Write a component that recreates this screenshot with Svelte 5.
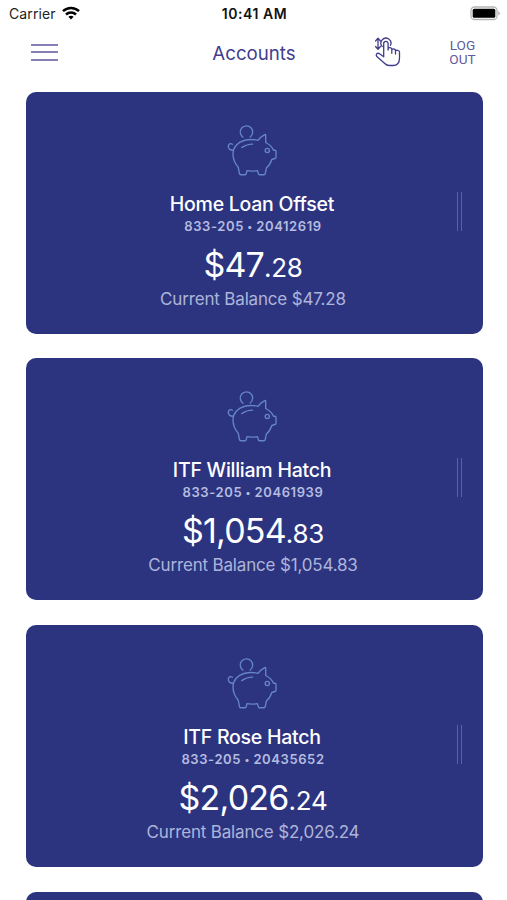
<script lang="ts">
	type Account = {
		name: string;
		bsb: string;
		number: string;
		dollars: string;
		cents: string;
	};

	const accounts: Account[] = [
		{ name: 'Home Loan Offset', bsb: '833-205', number: '20412619', dollars: '$47', cents: '.28' },
		{ name: 'ITF William Hatch', bsb: '833-205', number: '20461939', dollars: '$1,054', cents: '.83' },
		{ name: 'ITF Rose Hatch', bsb: '833-205', number: '20435652', dollars: '$2,026', cents: '.24' },
	];
</script>

<div class="screen">
	<div class="status">
		<div class="carrier">
			<span>Carrier</span>
			<svg width="18" height="14" viewBox="0 0 18 14" fill="none" stroke="#000" stroke-width="2.5">
				<path d="M1 5.2C5.5.9 12.5.9 17 5.2" />
				<path d="M4 8.5c2.8-2.600 7.200-2.600 10 0" />
				<path d="M6.400 10.700c1.500-1.300 3.700-1.300 5.200 0L9 13.500z" fill="#000" stroke="none" />
			</svg>
		</div>
		<div class="time">10:41 AM</div>
		<svg class="battery" width="30" height="15" viewBox="0 0 30 15">
			<rect x="1" y="1" width="26" height="12.5" rx="3.5" fill="#fff" stroke="#b5b5b5" stroke-width="1.3" />
			<rect x="2.700" y="2.700" width="22.600" height="9.100" rx="1.500" fill="#000" />
			<path d="M28.300 5v4.500q3-2.200 0-4.500" fill="#aaa" />
		</svg>
	</div>

	<header>
		<button type="button" class="menu" aria-label="Menu"><i></i><i></i><i></i></button>
		<h1>Accounts</h1>
		<button type="button" class="gesture" aria-label="Quick actions">
			<svg width="28" height="32" viewBox="0 0 28 32" fill="none" stroke="#3f3d8c" stroke-width="1.3" stroke-linecap="round" stroke-linejoin="round">
				<path d="M4 2.500v10.500M1.600 5 4 2.200 6.400 5M1.600 10.500 4 13.300l2.400-2.800" />
				<path d="M8.200 10.500a5 5 0 1 1 8.300-1.200" />
				<path d="M9.700 19V7.600a2.200 2.200 0 0 1 4.400 0V14v-1.300c0-1.500 3.700-1.300 3.700.6V15v-1c0-1.600 3.700-1.300 3.700.6V16v-.8c0-1.400 4-1.300 4 .8v6c0 4.600-2.500 7.500-6.500 7.500h-3.500c-2.300 0-3.700-.8-5-2.300L2.800 20.500c-1.600-2.200.6-4.200 2.800-2.700l4.100 3V18M17.800 15v2.300M21.500 16v2" />
			</svg>
		</button>
		<button type="button" class="logout">LOG<br />OUT</button>
	</header>

	<main>
		{#each accounts as account}
			<section class="card">
				<svg class="pig" width="52" height="54" viewBox="12 8 52 54" fill="none" stroke="#6584cb" stroke-width="1.350" stroke-linecap="round" stroke-linejoin="round">
					<path d="M28 21.200a6.200 6.200 0 1 1 7.200-.2" />
					<path d="M43 24.300c-4-1-9.500-1-14 .2-6 1.700-11 6.500-11 13.500 0 6 2 9.500 5.200 13.200l1.300 6.500q.2 1 1.200 1H30q1 0 1.200-1l.8-3q5 .7 10.500 0l.8 3q.2 1 1.200 1H49q1 0 1.200-1l1.300-6c2.700-2 4.300-5 5.300-8.200l3.200-1q1-.3 1-1.300v-6q0-1-1-1h-1.500c-1.500-3.500-4.500-6-7.800-7.700v-7.200q0-1.200-1-.6c-2.600 1.500-5 3.200-6.700 5.600z" />
					<path d="M26.800 31.600c3.200-2.300 6.700-3.500 10.900-3.500" />
					<circle cx="52.300" cy="34.500" r="2.100" />
					<path d="M18.300 34.200c-3.300 0-5-2-5-4s2.200-3.500 4-2" />
				</svg>
				<h2>{account.name}</h2>
				<p class="number">{account.bsb} <b>•</b> {account.number}</p>
				<p class="amount">{account.dollars}<small>{account.cents}</small></p>
				<p class="balance">Current Balance {account.dollars}{account.cents}</p>
				<span class="handle"></span>
			</section>
		{/each}
		<section class="card"></section>
	</main>
</div>

<style>
	:global(body) {
		background: #fff;
		overflow: hidden;
	}
	.screen {
		width: 507px;
		height: 900px;
		overflow: hidden;
		font-family: Inter, 'Liberation Sans', sans-serif;
	}
	.status {
		display: grid;
		grid-template-columns: 1fr auto 1fr;
		align-items: center;
		height: 27px;
		padding: 0 7px 0 9px;
		box-sizing: border-box;
		font-size: 14px;
	}
	.carrier {
		display: flex;
		align-items: center;
		gap: 6px;
		color: #222;
		letter-spacing: 0.1px;
	}
	.carrier svg {
		margin-top: -2px;
	}
	.time {
		font-weight: 600;
		letter-spacing: 0.550px;
		color: #111;
	}
	.battery {
		justify-self: end;
		margin-top: -1px;
	}
	header {
		display: grid;
		grid-template-columns: 27px 1fr 28px 46px 28px;
		align-items: center;
		height: 50px;
		padding: 0 31px;
		color: #423d8e;
	}
	h1 {
		margin: 2px 0 0;
		padding-left: 76px;
		text-align: center;
		font-size: 18.7px;
		font-weight: 400;
	}
	button {
		padding: 0;
		border: none;
		background: none;
		color: inherit;
	}
	.menu {
		display: flex;
		flex-direction: column;
		gap: 5.5px;
	}
	.menu i {
		width: 27px;
		height: 2px;
		background: #8580b5;
	}
	.gesture svg {
		display: block;
	}
	.logout {
		grid-column: 5;
		padding-left: 1px;
		font: 400 13.6px/14px Roboto, 'Liberation Sans', sans-serif;
		color: #5f5ba0;
	}
	main {
		display: flex;
		flex-direction: column;
		gap: 24.7px;
		padding: 14.5px 24.5px 0 25.5px;
	}
	.card {
		position: relative;
		display: flex;
		flex-direction: column;
		align-items: center;
		flex: none;
		height: 242px;
		padding: 32px 2px 0 0;
		box-sizing: border-box;
		border-radius: 10px;
		background: #2c347f;
		text-align: center;
	}
	h2 {
		margin: 14px 0 0;
		padding-right: 2px;
		font-size: 19.5px;
		line-height: 24px;
		font-weight: 500;
		letter-spacing: -0.25px;
		color: #fff;
	}
	p {
		margin: 0;
		white-space: nowrap;
	}
	.number {
		margin-top: 1px;
		font-size: 13px;
		line-height: 18px;
		font-weight: 600;
		letter-spacing: 0.6px;
		color: #b5bce0;
	}
	.number b {
		font-size: 10px;
		vertical-align: 1px;
	}
	.amount {
		margin-top: 9px;
		font-size: 34px;
		line-height: 42px;
		letter-spacing: -0.8px;
		color: #fff;
	}
	.amount small {
		font-size: 26px;
		letter-spacing: -0.3px;
	}
	.balance {
		margin-top: -1px;
		font-size: 17px;
		line-height: 22px;
		letter-spacing: -0.17px;
		color: #adb4da;
	}
	.handle {
		position: absolute;
		top: 100px;
		right: 21px;
		width: 3px;
		height: 39px;
		border: solid #5963a4;
		border-width: 0 1px;
	}
</style>
